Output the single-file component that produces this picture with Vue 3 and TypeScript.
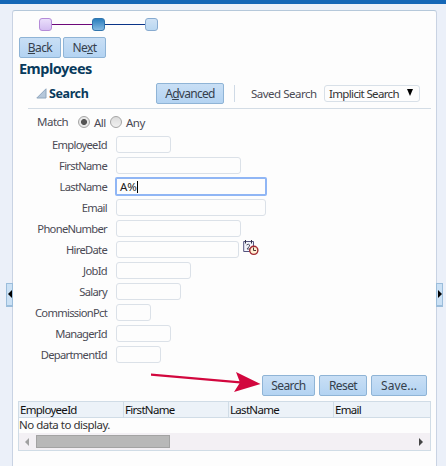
<template>
  <div class="page">
    <div class="topbar"></div>
    <div class="panel">
      <button class="splitter left" type="button" aria-label="Collapse left">
        <svg width="4" height="8" viewBox="0 0 4 8"><path d="M4 0V8L0 4Z" /></svg>
      </button>
      <button class="splitter right" type="button" aria-label="Collapse right">
        <svg width="4" height="8" viewBox="0 0 4 8"><path d="M0 0V8L4 4Z" /></svg>
      </button>

      <div class="train">
        <span class="stop visited"></span>
        <span class="rail purple"></span>
        <span class="stop current"></span>
        <span class="rail"></span>
        <span class="stop"></span>
      </div>

      <div class="nav">
        <button class="btn back" type="button"><u>B</u>ack</button>
        <button class="btn next" type="button">Ne<u>x</u>t</button>
      </div>

      <h1>Employees</h1>

      <div class="search-header">
        <svg class="disclosure" width="11" height="11" viewBox="0 0 11 11">
          <path d="M10 .8V10H.8Z" fill="#b5c7da" stroke="#8fa7be" />
        </svg>
        <h2>Search</h2>
        <button class="btn advanced" type="button">A<u>d</u>vanced</button>
        <span class="divider"></span>
        <span class="saved">Saved Search</span>
        <div class="select">
          <span>Implicit Search</span>
          <svg width="6" height="7" viewBox="0 0 6 7"><path d="M0 0H6L3 7Z" /></svg>
        </div>
      </div>

      <div class="match">
        <span class="match-label">Match</span>
        <span class="radio" :class="{ checked: match === 'all' }" @click="match = 'all'"></span>
        <span class="all">All</span>
        <span class="radio" :class="{ checked: match === 'any' }" @click="match = 'any'"></span>
        <span class="any">Any</span>
      </div>

      <div class="fields">
        <div v-for="field in fields" :key="field.label" class="field">
          <label>{{ field.label }}</label>
          <div
            class="input"
            :class="{ focused: field.focused }"
            :style="{ width: field.width + 'px' }"
          >
            <span v-if="field.value">{{ field.value }}</span>
            <i v-if="field.focused" class="caret"></i>
          </div>
          <svg v-if="field.date" class="calendar" width="16" height="16" viewBox="0 0 16 16">
            <path d="M.7 1.5H10.5V11.5H.7Z" fill="#f3f4fb" stroke="#55557f" />
            <path d="M2.5 0V3.5M8.5 0V3.5" stroke="#333348" />
            <path d="M3.5 5Q5.5 3.4 6.7 5Q6.7 6.5 4 9H7" fill="none" stroke="#505064" />
            <circle cx="10.8" cy="10.3" r="4.1" fill="#fff0d4" stroke="#a22a32" stroke-width="1.4" />
            <path d="M10.5 7.5V10.5H13" fill="none" stroke="#473232" />
          </svg>
        </div>
      </div>

      <div class="actions">
        <svg class="pointer" width="110" height="22" viewBox="0 0 110 22">
          <path d="M0 .5 92 8.4V10.7L0 2.8Z" />
          <path d="M85 -1 109.5 11 83 19 89 9.5Z" />
        </svg>
        <button class="btn search" type="button">Search</button>
        <button class="btn reset" type="button">Reset</button>
        <button class="btn save" type="button">Save...</button>
      </div>

      <div class="table">
        <div class="thead">
          <span v-for="column in columns" :key="column">{{ column }}</span>
        </div>
        <div class="empty">No data to display.</div>
        <div class="scrollbar">
          <svg width="4" height="8" viewBox="0 0 4 8"><path d="M4 0V8L0 4Z" fill="#a0a0a0" /></svg>
          <span class="thumb"></span>
          <svg class="end" width="4" height="8" viewBox="0 0 4 8"><path d="M0 0V8L4 4Z" fill="#454545" /></svg>
        </div>
      </div>
    </div>
  </div>
</template>

<script setup lang="ts">
import { ref } from 'vue'

interface Field {
  label: string
  width: number
  value?: string
  focused?: boolean
  date?: boolean
}

const match = ref<'all' | 'any'>('all')

const fields: Field[] = [
  { label: 'EmployeeId', width: 55 },
  { label: 'FirstName', width: 125 },
  { label: 'LastName', width: 152, value: 'A%', focused: true },
  { label: 'Email', width: 150 },
  { label: 'PhoneNumber', width: 125 },
  { label: 'HireDate', width: 123, date: true },
  { label: 'JobId', width: 75 },
  { label: 'Salary', width: 65 },
  { label: 'CommissionPct', width: 35 },
  { label: 'ManagerId', width: 55 },
  { label: 'DepartmentId', width: 45 }
]

const columns = ['EmployeeId', 'FirstName', 'LastName', 'Email']
</script>

<style>
body {
  overflow: hidden;
}
</style>

<style scoped>
* {
  box-sizing: border-box;
}

.page {
  height: 466px;
  background: #ebf0f9;
  font: 11.5px/14px "Noto Sans", sans-serif;
  letter-spacing: -0.5px;
  color: #4b4b55;
  white-space: nowrap;
  overflow: hidden;
}

.topbar {
  height: 4px;
  background: #1467b7;
}

.panel {
  position: relative;
  width: 425px;
  height: 466px;
  margin: 6px 0 0 12px;
  padding: 7px 5px 0 6px;
  background: #fdfdfd;
  border: 1px solid #c9d3e3;
  border-top-color: #b5c8da;
  border-radius: 3px 3px 0 0;
}

svg {
  display: block;
  flex: none;
}

.splitter {
  position: absolute;
  top: 272px;
  width: 7px;
  height: 24px;
  padding: 0;
  display: flex;
  align-items: center;
  justify-content: center;
  background: #cbe1f5;
  border: 1px solid #9bbddb;
  border-bottom-width: 2px;
}

.splitter svg {
  margin-top: -2px;
}

.splitter.left {
  left: -7px;
}

.splitter.right {
  right: -7px;
}

.train {
  display: flex;
  align-items: center;
  height: 13px;
  margin-left: 20px;
}

.stop {
  width: 13px;
  height: 13px;
  border: 1px solid #88abd0;
  border-radius: 3px;
  background: linear-gradient(#cfe2f5, #b9d7f1);
}

.stop.visited {
  border-color: #b58bd8;
  background: linear-gradient(#eadffb, #d3bdf1);
}

.stop.current {
  border-color: #3175ad;
  background: linear-gradient(#2a7dbd, #84b8e2);
}

.rail {
  width: 40px;
  height: 1px;
  background: #0a3488;
}

.rail.purple {
  background: #6d0879;
}

.nav {
  display: flex;
  gap: 2px;
  margin-top: 6px;
}

.btn {
  height: 21px;
  padding: 0;
  flex: none;
  border: 1px solid #8fb4d6;
  border-radius: 2px;
  background: linear-gradient(#c9dff5, #b3d3f2);
  color: #35404c;
  font: 12px/17px "Noto Sans", sans-serif;
  letter-spacing: -0.6px;
}

.btn u {
  text-underline-offset: 1px;
}

.back {
  width: 42px;
}

.next {
  width: 43px;
}

h1 {
  margin: 0;
  font-size: 14.5px;
  line-height: 20px;
  color: #083a5c;
}

.search-header {
  display: flex;
  align-items: center;
  height: 31px;
  margin-left: 9px;
  padding: 0 10px 0 8px;
  border-bottom: 1px solid #d3dce5;
}

h2 {
  width: 107px;
  margin: 0 0 0 2px;
  padding-top: 1px;
  font-size: 12.5px;
  letter-spacing: -0.4px;
  color: #083a5c;
}

.advanced {
  width: 68px;
  letter-spacing: -0.7px;
}

.divider {
  width: 1px;
  height: 17px;
  margin-left: 10px;
  background: #cfdae6;
}

.saved {
  width: 73px;
  margin-left: 16px;
  padding-top: 1px;
}

.select {
  display: flex;
  align-items: center;
  justify-content: space-between;
  width: 96px;
  height: 17px;
  padding: 0 6px 0 4px;
  border: 1px solid #d8e0e8;
  border-radius: 3px;
  flex: none;
  color: #333;
  letter-spacing: -0.65px;
}

.select span {
  padding-top: 1px;
}

.select svg {
  margin-top: -1px;
}

.match {
  display: flex;
  align-items: center;
  height: 14px;
  margin: 6px 0 0 18px;
}

.match-label {
  width: 41px;
}

.radio {
  width: 12px;
  height: 12px;
  border: 1px solid #a5a5a5;
  border-radius: 50%;
  background: linear-gradient(#dcdcdc, #f0f0f0);
}

.radio.checked {
  background: radial-gradient(circle, #555 2.6px, #e8e8e8 3.4px);
}

.all {
  width: 16px;
  margin-left: 4px;
  padding-top: 2px;
}

.any {
  margin-left: 4px;
  padding-top: 2px;
}

.fields {
  margin-top: 5px;
}

.field {
  display: flex;
  align-items: center;
  height: 21px;
}

label {
  width: 88px;
  margin-right: 9px;
  padding-top: 1px;
  font-size: 11.2px;
  letter-spacing: -0.7px;
  text-align: right;
}

.input {
  display: flex;
  align-items: center;
  height: 17px;
  border: 1px solid #dbe1e8;
  border-radius: 3px;
  color: #222;
  letter-spacing: 0;
}

.input.focused {
  height: 19px;
  margin-left: -1px;
  padding-left: 3px;
  border: 2px solid #90b6f5;
  border-radius: 2px;
}

.caret {
  width: 1px;
  height: 12px;
  background: #000;
}

.calendar {
  margin: -4px 0 0 4px;
}

.actions {
  display: flex;
  justify-content: flex-end;
  gap: 4px;
  height: 21px;
  margin: 10px 4px 0 0;
}

.pointer {
  margin: -2px -3px 0 0;
  overflow: visible;
  fill: #d2073e;
}

.search {
  width: 53px;
}

.reset {
  width: 48px;
}

.save {
  width: 56px;
  letter-spacing: 0;
}

.table {
  width: 413px;
  height: 50px;
  margin-top: 5px;
  margin-left: -1px;
  border: 1px solid #d0dce6;
  color: #111;
}

.thead {
  display: grid;
  grid-template-columns: 105px 105px 105px 1fr;
  height: 16px;
  border-bottom: 1px solid #d0dce6;
  background: #ecf2f8;
  line-height: 16px;
  letter-spacing: -0.7px;
}

.thead span {
  padding-left: 1px;
  border-right: 1px solid #d0dce6;
}

.thead span:last-child {
  border-right: 0;
}

.empty {
  height: 15px;
  color: #333;
}

.scrollbar {
  display: flex;
  align-items: center;
  height: 17px;
  padding: 0 7px 0 6px;
  background: #f3f0f4;
}

.thumb {
  width: 134px;
  height: 13px;
  margin-left: 7px;
  border: 1px solid #a3a3a3;
  background: #b8b8b8;
}

.end {
  margin-left: auto;
}
</style>
